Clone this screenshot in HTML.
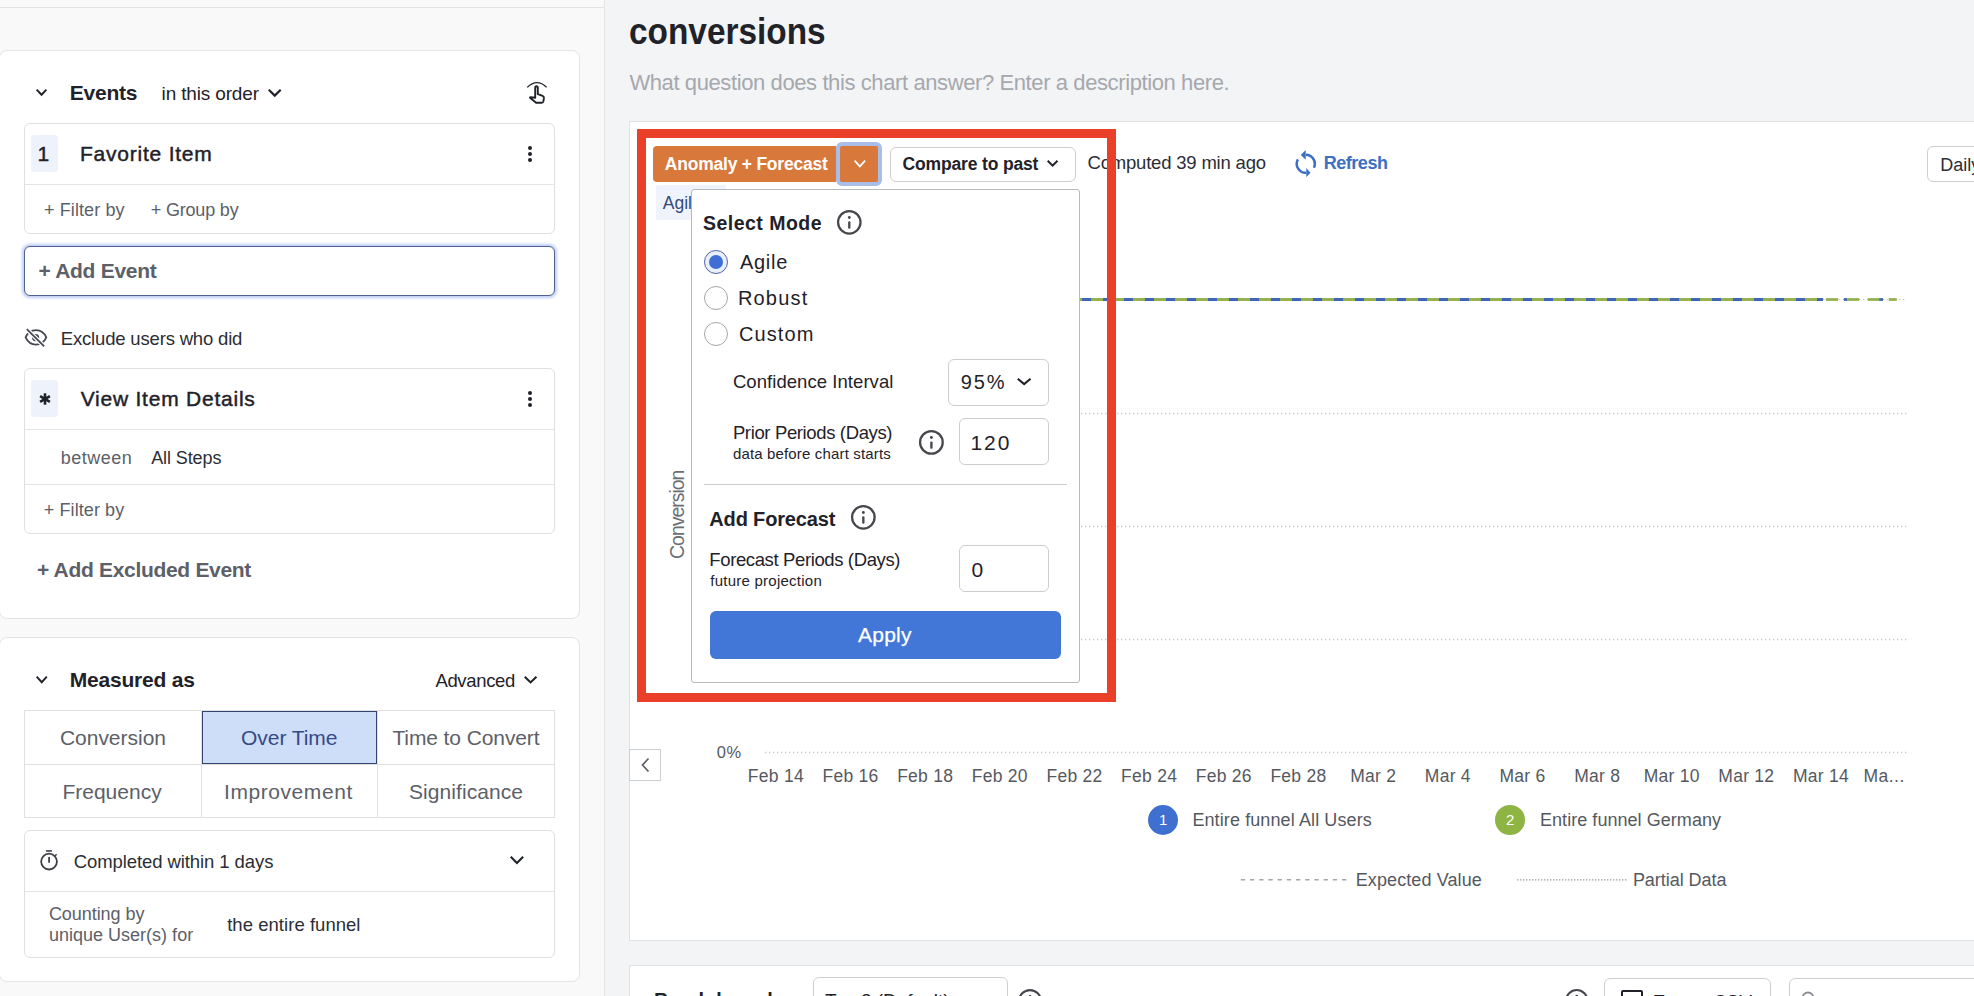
<!DOCTYPE html>
<html><head><meta charset="utf-8">
<style>
*{box-sizing:border-box;margin:0;padding:0}
html,body{width:1974px;height:996px;overflow:hidden;font-family:"Liberation Sans",sans-serif;color:#1f2229}
body{position:relative;background:#f3f4f6}
.a{position:absolute}
.t{position:absolute;white-space:nowrap;line-height:1;z-index:2}
.card{position:absolute;background:#fff;border:1px solid #e3e4e6;border-radius:8px}
.box{position:absolute;background:#fff;border:1px solid #dfe0e2;border-radius:6px}
</style></head>
<body>
<div class="a" style="left:0;top:0;width:605px;height:996px;background:#f9f9fa;border-right:1px solid #e4e5e7"></div>
<div class="a" style="left:0;top:7px;width:604px;height:1px;background:#e2e3e5"></div>
<div class="card" style="left:-1px;top:50px;width:581px;height:569px"></div>
<svg class="a" style="left:35.9px;top:89.2px;overflow:visible;" width="11.10" height="7.10" viewBox="0 0 11.10 7.10"><path d="M0.67 0.67 L5.55 5.76 L10.43 0.67" fill="none" stroke="#1f2229" stroke-width="1.9" stroke-linejoin="miter"/></svg>
<svg class="a" style="left:267.5px;top:88.8px;overflow:visible;" width="13.50" height="8.20" viewBox="0 0 13.50 8.20"><path d="M0.78 0.78 L6.75 6.64 L12.72 0.78" fill="none" stroke="#1f2229" stroke-width="2.2" stroke-linejoin="miter"/></svg>
<svg class="a" style="left:518px;top:74px" width="38" height="38" viewBox="0 0 38 38"><path d="M9.2 13.4 Q18.9 4 28.6 13.2" fill="none" stroke="#1f2229" stroke-width="1.3"/><path d="M17.2 23.8 L17.2 14 Q17.2 12.3 18.5 12.3 Q19.8 12.3 19.8 14 L19.8 20.1 L24.6 21.9 Q26.1 22.5 25.9 24.2 L25.4 27.4 Q25.1 28.8 23.8 28.8 L18.1 28.8 L12.3 24.1 Q11.5 23.3 12.6 23.2 Z" fill="none" stroke="#1f2229" stroke-width="1.9" stroke-linejoin="round"/></svg>
<div class="box" style="left:24px;top:123px;width:531px;height:111px"></div>
<div class="a" style="left:31px;top:135px;width:27px;height:37px;background:#eef3fb;border-radius:3px"></div>
<svg class="a" style="left:526px;top:144px" width="8" height="20" viewBox="0 0 8 20"><circle cx="4" cy="4" r="2" fill="#1f2229"/><circle cx="4" cy="10" r="2" fill="#1f2229"/><circle cx="4" cy="16" r="2" fill="#1f2229"/></svg>
<div class="a" style="left:25px;top:184px;width:529px;height:1px;background:#e3e4e6"></div>
<div class="a" style="left:24px;top:246px;width:531px;height:50px;border:1.3px solid #52618f;border-radius:6px;background:#fff;box-shadow:0 0 3px 2px #bccdf5"></div>
<svg class="a" style="left:20px;top:320px" width="34" height="34" viewBox="0 0 34 34"><path d="M5.6 17.4 C8.5 11.2 12 10.2 16 10.2 C20 10.2 23.5 11.2 26.3 17.4 C23.5 23.6 20 24.6 16 24.6 C12 24.6 8.5 23.6 5.6 17.4 Z" fill="none" stroke="#45484f" stroke-width="1.8"/><circle cx="15.6" cy="17.6" r="3.6" fill="#45484f"/><path d="M6.8 9.2 L24.2 26.3" stroke="#fff" stroke-width="4.2"/><path d="M6.8 9.2 L24.2 26.3" stroke="#45484f" stroke-width="1.8"/></svg>
<div class="box" style="left:24px;top:368px;width:531px;height:166px"></div>
<div class="a" style="left:31px;top:380px;width:27px;height:37px;background:#eef3fb;border-radius:3px"></div>
<svg class="a" style="left:37.5px;top:391.7px" width="14" height="14" viewBox="0 0 14 14"><g stroke="#1f2229" stroke-width="2.6"><path d="M7 1.3 V12.7"/><path d="M2.1 4.15 L11.9 9.85"/><path d="M2.1 9.85 L11.9 4.15"/></g></svg>
<svg class="a" style="left:526px;top:389px" width="8" height="20" viewBox="0 0 8 20"><circle cx="4" cy="4" r="2" fill="#1f2229"/><circle cx="4" cy="10" r="2" fill="#1f2229"/><circle cx="4" cy="16" r="2" fill="#1f2229"/></svg>
<div class="a" style="left:25px;top:429px;width:529px;height:1px;background:#e3e4e6"></div>
<div class="a" style="left:25px;top:484px;width:529px;height:1px;background:#e3e4e6"></div>
<div class="card" style="left:-1px;top:637px;width:581px;height:345px"></div>
<svg class="a" style="left:35.7px;top:676.2px;overflow:visible;" width="11.50" height="7.60" viewBox="0 0 11.50 7.60"><path d="M0.67 0.67 L5.75 6.26 L10.83 0.67" fill="none" stroke="#1f2229" stroke-width="1.9" stroke-linejoin="miter"/></svg>
<svg class="a" style="left:523.5px;top:675.8px;overflow:visible;" width="13.20" height="7.90" viewBox="0 0 13.20 7.90"><path d="M0.74 0.74 L6.60 6.42 L12.46 0.74" fill="none" stroke="#1f2229" stroke-width="2.1" stroke-linejoin="miter"/></svg>
<div class="a" style="left:24px;top:710px;width:531px;height:108px;border:1px solid #dfe0e2;background:#fff"></div>
<div class="a" style="left:201px;top:710px;width:1px;height:108px;background:#dfe0e2"></div>
<div class="a" style="left:377px;top:710px;width:1px;height:108px;background:#dfe0e2"></div>
<div class="a" style="left:25px;top:764px;width:529px;height:1px;background:#dfe0e2"></div>
<div class="a" style="left:202px;top:711px;width:175px;height:53px;background:#cfdef8;border:1.4px solid #34446f"></div>
<div class="box" style="left:24px;top:830px;width:531px;height:128px"></div>
<svg class="a" style="left:34px;top:844px" width="30" height="30" viewBox="0 0 30 30"><circle cx="15.05" cy="17.6" r="7.9" fill="none" stroke="#3c3f46" stroke-width="1.8"/><path d="M12 6.95 H17.9" stroke="#3c3f46" stroke-width="1.6"/><path d="M15.1 13.1 V18.7" stroke="#3c3f46" stroke-width="1.8"/><path d="M21.1 11.7 L22.6 10.2" stroke="#3c3f46" stroke-width="1.6"/></svg>
<svg class="a" style="left:510.2px;top:856.4px;overflow:visible;" width="13.90" height="8.50" viewBox="0 0 13.90 8.50"><path d="M0.74 0.74 L6.95 7.02 L13.16 0.74" fill="none" stroke="#1f2229" stroke-width="2.1" stroke-linejoin="miter"/></svg>
<div class="a" style="left:25px;top:891px;width:529px;height:1px;background:#e3e4e6"></div>
<div class="a" style="left:629px;top:121px;width:1360px;height:820px;background:#fff;border:1px solid #e1e2e4"></div>
<svg class="a" style="left:630px;top:122px" width="1344" height="818" viewBox="630 122 1344 818"><g stroke="#c5c7cb" stroke-width="1.3" stroke-dasharray="1.3 2.7"><line x1="765" y1="413.5" x2="1907" y2="413.5"/><line x1="765" y1="526.5" x2="1907" y2="526.5"/><line x1="765" y1="639.5" x2="1907" y2="639.5"/><line x1="765" y1="752.5" x2="1907" y2="752.5"/></g><line x1="1823" y1="299.5" x2="1907" y2="299.5" stroke="#b8bbc0" stroke-width="1.2" stroke-dasharray="1.3 2.7"/><line x1="1080" y1="299.5" x2="1823" y2="299.5" stroke="#95b150" stroke-width="2.8"/><line x1="1080" y1="299.5" x2="1823" y2="299.5" stroke="#3e66b8" stroke-width="2.8" stroke-dasharray="9 12" stroke-dashoffset="19"/><g stroke-width="2.8"><line x1="1825.8" y1="299.5" x2="1838.2" y2="299.5" stroke="#95b150"/><line x1="1843.9" y1="299.5" x2="1847.2" y2="299.5" stroke="#3e66b8"/><line x1="1847.2" y1="299.5" x2="1859.2" y2="299.5" stroke="#95b150"/><line x1="1867.8" y1="299.5" x2="1879.2" y2="299.5" stroke="#95b150"/><line x1="1879.2" y1="299.5" x2="1883" y2="299.5" stroke="#3e66b8"/><line x1="1888.8" y1="299.5" x2="1896.8" y2="299.5" stroke="#95b150"/></g></svg>
<div class="a" style="left:629px;top:749px;width:32px;height:32px;border:1px solid #cdcfd3;background:#fff"></div>
<svg class="a" style="left:640px;top:757px" width="11" height="16" viewBox="0 0 11 16"><path d="M8.5 1.5 L2.5 8 L8.5 14.5" fill="none" stroke="#5a5e66" stroke-width="1.7"/></svg>
<div class="a" style="left:1147.8px;top:805px;width:30.1px;height:30px;border-radius:50%;background:#3f6fcf"></div>
<div class="a" style="left:1494.9px;top:804.9px;width:30.2px;height:30px;border-radius:50%;background:#8eb544"></div>
<svg class="a" style="left:1240px;top:875px" width="390" height="10" viewBox="1240 875 390 10"><line x1="1240.8" y1="879.7" x2="1350" y2="879.7" stroke="#a3a6ab" stroke-width="1.6" stroke-dasharray="4.3 4.9"/><line x1="1517" y1="879.8" x2="1627" y2="879.8" stroke="#9b9ea4" stroke-width="1.3" stroke-dasharray="1.4 1.6"/></svg>
<svg class="a" style="left:1288px;top:145px" width="36" height="37" viewBox="0 0 36 37"><path d="M17.8 9.8 A9 9 0 0 1 25.9 22.7" fill="none" stroke="#3d6fc3" stroke-width="2.5"/><path d="M9.9 14.4 A9 9 0 0 0 18.4 27.8" fill="none" stroke="#3d6fc3" stroke-width="2.5"/><path d="M12.8 9.9 L17.7 5.1 L17.7 14.7 Z" fill="#3d6fc3"/><path d="M22.5 27.7 L18.3 23 L18.3 32.2 Z" fill="#3d6fc3"/></svg>
<div class="a" style="left:1927px;top:146px;width:80px;height:36px;border:1px solid #cdcfd3;border-radius:6px;background:#fff"></div>
<div class="a" style="left:890px;top:146.5px;width:186px;height:35.5px;border:1px solid #cdcfd3;border-radius:6px;background:#fff"></div>
<svg class="a" style="left:1046.8px;top:160.4px;overflow:visible;" width="11.20" height="7.10" viewBox="0 0 11.20 7.10"><path d="M0.71 0.71 L5.60 5.69 L10.49 0.71" fill="none" stroke="#1f2229" stroke-width="2" stroke-linejoin="miter"/></svg>
<div class="a" style="left:653.3px;top:146px;width:183px;height:35.5px;background:#d8783b;border-radius:4px 0 0 4px"></div>
<div class="a" style="left:836px;top:141.6px;width:45.7px;height:44px;border:4px solid #a9bde9;border-radius:6px;background:#d8783b"></div>
<svg class="a" style="left:853.6px;top:160.3px;overflow:visible;z-index:3;" width="11.70" height="7.60" viewBox="0 0 11.70 7.60"><path d="M0.60 0.60 L5.85 6.40 L11.10 0.60" fill="none" stroke="#fff" stroke-width="1.7" stroke-linejoin="miter"/></svg>
<div class="a" style="left:656px;top:185.4px;width:70px;height:35px;background:#eff4fc;border-radius:2px"></div>
<div class="a" style="left:637px;top:129px;width:479px;height:573px;border:9px solid #ea4029;z-index:5"></div>
<div class="a" style="left:691px;top:188.8px;width:388.5px;height:494.2px;background:#fff;border:1px solid #b7b9bd;border-radius:3px;z-index:6"></div>
<svg class="a" style="left:836.5px;top:210.3px;z-index:7;overflow:visible" width="24.6" height="24.6" viewBox="0 0 24 24"><circle cx="12" cy="12" r="10.95" fill="none" stroke="#46484e" stroke-width="2.2"/><circle cx="12" cy="7.3" r="1.4" fill="#46484e"/><path d="M12 12.2 V17.1" stroke="#46484e" stroke-width="2.3" stroke-linecap="round"/></svg>
<div class="a" style="left:704px;top:249.8px;width:23.8px;height:23.8px;border-radius:50%;border:1.3px solid #4d62a6;background:#e9f0fb;z-index:7"></div>
<div class="a" style="left:708.9px;top:254.6px;width:14.2px;height:14.2px;border-radius:50%;background:#3e6ed6;z-index:7"></div>
<div class="a" style="left:704px;top:285.8px;width:24px;height:24px;border-radius:50%;border:1px solid #a3a6ab;z-index:7"></div>
<div class="a" style="left:704px;top:322px;width:24px;height:24px;border-radius:50%;border:1px solid #a3a6ab;z-index:7"></div>
<div class="a" style="left:948.3px;top:358.5px;width:100.3px;height:47px;border:1px solid #cbcdd1;border-radius:6px;z-index:7"></div>
<svg class="a" style="left:1017.3px;top:378px;overflow:visible;z-index:7;" width="14.30" height="7.60" viewBox="0 0 14.30 7.60"><path d="M0.74 0.74 L7.15 6.12 L13.56 0.74" fill="none" stroke="#1f2229" stroke-width="2.1" stroke-linejoin="miter"/></svg>
<svg class="a" style="left:919.4px;top:429.6px;z-index:7;overflow:visible" width="24.8" height="24.8" viewBox="0 0 24 24"><circle cx="12" cy="12" r="10.95" fill="none" stroke="#46484e" stroke-width="2.2"/><circle cx="12" cy="7.3" r="1.4" fill="#46484e"/><path d="M12 12.2 V17.1" stroke="#46484e" stroke-width="2.3" stroke-linecap="round"/></svg>
<div class="a" style="left:959.4px;top:418.3px;width:89.2px;height:47px;border:1px solid #cbcdd1;border-radius:6px;z-index:7"></div>
<div class="a" style="left:704px;top:484px;width:363px;height:1px;background:#c9cbcf;z-index:7"></div>
<svg class="a" style="left:850.5px;top:505.4px;z-index:7;overflow:visible" width="24.7" height="24.7" viewBox="0 0 24 24"><circle cx="12" cy="12" r="10.95" fill="none" stroke="#46484e" stroke-width="2.2"/><circle cx="12" cy="7.3" r="1.4" fill="#46484e"/><path d="M12 12.2 V17.1" stroke="#46484e" stroke-width="2.3" stroke-linecap="round"/></svg>
<div class="a" style="left:959px;top:545px;width:89.7px;height:47.4px;border:1px solid #cbcdd1;border-radius:6px;z-index:7"></div>
<div class="a" style="left:710.3px;top:610.9px;width:350.6px;height:47.8px;background:#4276d7;border-radius:6px;z-index:7"></div>
<div class="a" style="left:629px;top:965px;width:1360px;height:60px;background:#fff;border:1px solid #e1e2e4"></div>
<div class="a" style="left:812.6px;top:977.2px;width:195px;height:40px;border:1px solid #cdcfd3;border-radius:6px;background:#fff"></div>
<svg class="a" style="left:1017.8px;top:988.8px;z-index:1;overflow:visible" width="24" height="24" viewBox="0 0 24 24"><circle cx="12" cy="12" r="10.95" fill="none" stroke="#46484e" stroke-width="2.2"/><circle cx="12" cy="7.3" r="1.4" fill="#46484e"/><path d="M12 12.2 V17.1" stroke="#46484e" stroke-width="2.3" stroke-linecap="round"/></svg>
<svg class="a" style="left:1565.3px;top:989.2px;z-index:1;overflow:visible" width="23.5" height="23.5" viewBox="0 0 24 24"><circle cx="12" cy="12" r="10.95" fill="none" stroke="#46484e" stroke-width="2.2"/><circle cx="12" cy="7.3" r="1.4" fill="#46484e"/><path d="M12 12.2 V17.1" stroke="#46484e" stroke-width="2.3" stroke-linecap="round"/></svg>
<div class="a" style="left:1604.4px;top:977.9px;width:166.2px;height:40px;border:1px solid #cdcfd3;border-radius:6px;background:#fff"></div>
<div class="a" style="left:1620.8px;top:990.4px;width:22.5px;height:18px;border:2.2px solid #1f2229;border-radius:2px"></div>
<div class="a" style="left:1789.3px;top:978.4px;width:200px;height:40px;border:1px solid #cdcfd3;border-radius:6px;background:#fff"></div>
<svg class="a" style="left:1800px;top:990px" width="20" height="20" viewBox="0 0 20 20"><circle cx="8" cy="8" r="5.5" fill="none" stroke="#8a8d93" stroke-width="1.8"/></svg>
<div class="t" style="left:69.80px;top:82.20px;font-size:21px;color:#1f2229;letter-spacing:-0.240px;font-weight:bold;">Events</div>
<div class="t" style="left:161.60px;top:83.80px;font-size:19px;color:#1f2229;letter-spacing:-0.158px;">in this order</div>
<div class="t" style="left:37.60px;top:142.90px;font-size:21px;color:#1f2229;letter-spacing:1.100px;-webkit-text-stroke:0.45px currentColor;">1</div>
<div class="t" style="left:79.90px;top:142.90px;font-size:21px;color:#1f2229;letter-spacing:0.783px;-webkit-text-stroke:0.45px currentColor;">Favorite Item</div>
<div class="t" style="left:44.00px;top:201.20px;font-size:18px;color:#5c6068;letter-spacing:0.100px;">+ Filter by</div>
<div class="t" style="left:150.80px;top:201.20px;font-size:18px;color:#5c6068;letter-spacing:-0.189px;">+ Group by</div>
<div class="t" style="left:38.50px;top:259.90px;font-size:21px;color:#5c6068;letter-spacing:-0.300px;font-weight:bold;">+ Add Event</div>
<div class="t" style="left:60.80px;top:330.20px;font-size:18.5px;color:#2b2e35;letter-spacing:-0.175px;">Exclude users who did</div>
<div class="t" style="left:80.70px;top:387.80px;font-size:21px;color:#1f2229;letter-spacing:0.769px;-webkit-text-stroke:0.45px currentColor;">View Item Details</div>
<div class="t" style="left:60.80px;top:449.20px;font-size:18px;color:#5c6068;letter-spacing:0.467px;">between</div>
<div class="t" style="left:151.20px;top:449.20px;font-size:18px;color:#2b2e35;letter-spacing:-0.100px;">All Steps</div>
<div class="t" style="left:43.80px;top:501.20px;font-size:18px;color:#5c6068;letter-spacing:0.090px;">+ Filter by</div>
<div class="t" style="left:36.90px;top:559.00px;font-size:21px;color:#5c6068;letter-spacing:-0.311px;font-weight:bold;">+ Add Excluded Event</div>
<div class="t" style="left:69.70px;top:669.00px;font-size:21px;color:#1f2229;letter-spacing:-0.190px;font-weight:bold;">Measured as</div>
<div class="t" style="left:435.40px;top:671.90px;font-size:18.5px;color:#1f2229;letter-spacing:-0.343px;">Advanced</div>
<div class="t" style="left:59.90px;top:727.10px;font-size:21px;color:#5c6068;letter-spacing:-0.011px;">Conversion</div>
<div class="t" style="left:241.10px;top:727.10px;font-size:21px;color:#344a85;letter-spacing:-0.062px;">Over Time</div>
<div class="t" style="left:392.40px;top:727.10px;font-size:21px;color:#5c6068;letter-spacing:-0.100px;">Time to Convert</div>
<div class="t" style="left:62.40px;top:780.80px;font-size:21px;color:#5c6068;letter-spacing:0.012px;">Frequency</div>
<div class="t" style="left:224.00px;top:780.80px;font-size:21px;color:#5c6068;letter-spacing:0.570px;">Improvement</div>
<div class="t" style="left:408.90px;top:780.80px;font-size:21px;color:#5c6068;letter-spacing:0.082px;">Significance</div>
<div class="t" style="left:73.70px;top:853.20px;font-size:18.5px;color:#2b2e35;letter-spacing:-0.082px;">Completed within 1 days</div>
<div class="t" style="left:48.90px;top:905.10px;font-size:18px;color:#5c6068;letter-spacing:-0.050px;">Counting by</div>
<div class="t" style="left:48.90px;top:926.00px;font-size:18px;color:#5c6068;letter-spacing:0.012px;">unique User(s) for</div>
<div class="t" style="left:227.20px;top:916.10px;font-size:18.5px;color:#2b2e35;letter-spacing:0.038px;">the entire funnel</div>
<div class="t" style="left:629.40px;top:13.00px;font-size:37px;color:#1f2229;font-weight:bold;transform-origin:0 0;transform:scaleX(0.9019);">conversions</div>
<div class="t" style="left:629.40px;top:72.10px;font-size:22px;color:#a5a8ad;letter-spacing:-0.398px;">What question does this chart answer? Enter a description here.</div>
<div class="t" style="left:664.80px;top:156.00px;font-size:17.5px;color:#fff;letter-spacing:-0.224px;font-weight:bold;">Anomaly + Forecast</div>
<div class="t" style="left:902.60px;top:155.90px;font-size:17.5px;color:#1f2229;letter-spacing:-0.164px;font-weight:bold;">Compare to past</div>
<div class="t" style="left:1087.50px;top:154.40px;font-size:18.5px;color:#2b2e35;letter-spacing:-0.194px;">Computed 39 min ago</div>
<div class="t" style="left:1323.80px;top:154.40px;font-size:18px;color:#3d6fc3;letter-spacing:-0.483px;font-weight:bold;">Refresh</div>
<div class="t" style="left:1940.30px;top:156.00px;font-size:18px;color:#2b2e35;">Daily</div>
<div class="t" style="left:662.80px;top:195.00px;font-size:17.5px;color:#34497f;">Agile</div>
<div class="t" style="z-index:7;left:702.90px;top:214.10px;font-size:19.5px;color:#1f2229;letter-spacing:0.490px;font-weight:bold;">Select Mode</div>
<div class="t" style="z-index:7;left:739.90px;top:252.40px;font-size:20px;color:#1f2229;letter-spacing:0.750px;">Agile</div>
<div class="t" style="z-index:7;left:737.90px;top:288.10px;font-size:20px;color:#1f2229;letter-spacing:1.200px;">Robust</div>
<div class="t" style="z-index:7;left:738.90px;top:323.70px;font-size:20px;color:#1f2229;letter-spacing:1.100px;">Custom</div>
<div class="t" style="z-index:7;left:732.90px;top:372.70px;font-size:18.5px;color:#1f2229;letter-spacing:0.061px;">Confidence Interval</div>
<div class="t" style="z-index:7;left:960.80px;top:372.40px;font-size:20px;color:#1f2229;letter-spacing:1.850px;">95%</div>
<div class="t" style="z-index:7;left:732.90px;top:424.30px;font-size:18.5px;color:#1f2229;letter-spacing:-0.363px;">Prior Periods (Days)</div>
<div class="t" style="z-index:7;left:732.90px;top:445.50px;font-size:15px;color:#1f2229;letter-spacing:0.157px;">data before chart starts</div>
<div class="t" style="z-index:7;left:970.60px;top:432.40px;font-size:21px;color:#1f2229;letter-spacing:1.850px;">120</div>
<div class="t" style="z-index:7;left:709.30px;top:508.90px;font-size:20px;color:#1f2229;letter-spacing:-0.164px;font-weight:bold;">Add Forecast</div>
<div class="t" style="z-index:7;left:709.30px;top:550.80px;font-size:18.5px;color:#1f2229;letter-spacing:-0.377px;">Forecast Periods (Days)</div>
<div class="t" style="z-index:7;left:710.30px;top:572.50px;font-size:15px;color:#1f2229;letter-spacing:0.244px;">future projection</div>
<div class="t" style="z-index:7;left:971.60px;top:559.20px;font-size:21px;color:#1f2229;letter-spacing:0.600px;">0</div>
<div class="t" style="z-index:7;left:858.00px;top:624.00px;font-size:21px;color:#fff;letter-spacing:0.250px;-webkit-text-stroke:0.25px currentColor;">Apply</div>
<div class="t" style="left:716.70px;top:744.20px;font-size:16.5px;color:#55595f;letter-spacing:0.600px;">0%</div>
<div class="t" style="left:747.85px;top:767.50px;font-size:17.5px;color:#55595f;letter-spacing:0.260px;">Feb 14</div>
<div class="t" style="left:822.50px;top:767.50px;font-size:17.5px;color:#55595f;letter-spacing:0.260px;">Feb 16</div>
<div class="t" style="left:897.15px;top:767.50px;font-size:17.5px;color:#55595f;letter-spacing:0.260px;">Feb 18</div>
<div class="t" style="left:971.80px;top:767.50px;font-size:17.5px;color:#55595f;letter-spacing:0.260px;">Feb 20</div>
<div class="t" style="left:1046.45px;top:767.50px;font-size:17.5px;color:#55595f;letter-spacing:0.260px;">Feb 22</div>
<div class="t" style="left:1121.10px;top:767.50px;font-size:17.5px;color:#55595f;letter-spacing:0.260px;">Feb 24</div>
<div class="t" style="left:1195.75px;top:767.50px;font-size:17.5px;color:#55595f;letter-spacing:0.260px;">Feb 26</div>
<div class="t" style="left:1270.40px;top:767.50px;font-size:17.5px;color:#55595f;letter-spacing:0.260px;">Feb 28</div>
<div class="t" style="left:1350.18px;top:767.50px;font-size:17.5px;color:#55595f;letter-spacing:0.260px;">Mar 2</div>
<div class="t" style="left:1424.83px;top:767.50px;font-size:17.5px;color:#55595f;letter-spacing:0.260px;">Mar 4</div>
<div class="t" style="left:1499.48px;top:767.50px;font-size:17.5px;color:#55595f;letter-spacing:0.260px;">Mar 6</div>
<div class="t" style="left:1574.13px;top:767.50px;font-size:17.5px;color:#55595f;letter-spacing:0.260px;">Mar 8</div>
<div class="t" style="left:1643.65px;top:767.50px;font-size:17.5px;color:#55595f;letter-spacing:0.260px;">Mar 10</div>
<div class="t" style="left:1718.30px;top:767.50px;font-size:17.5px;color:#55595f;letter-spacing:0.260px;">Mar 12</div>
<div class="t" style="left:1792.95px;top:767.50px;font-size:17.5px;color:#55595f;letter-spacing:0.260px;">Mar 14</div>
<div class="t" style="left:668.00px;top:559.30px;font-size:19.5px;color:#6a6e75;letter-spacing:-1.022px;transform:rotate(-90deg);transform-origin:0 0;">Conversion</div>
<div class="t" style="left:1863.40px;top:767.50px;font-size:17.5px;color:#55595f;letter-spacing:0.500px;">Ma...</div>
<div class="t" style="left:1192.40px;top:811.00px;font-size:18px;color:#55595f;letter-spacing:0.105px;">Entire funnel All Users</div>
<div class="t" style="left:1540.00px;top:810.90px;font-size:18px;color:#55595f;letter-spacing:0.045px;">Entire funnel Germany</div>
<div class="t" style="left:1355.70px;top:870.80px;font-size:18px;color:#55595f;letter-spacing:0.108px;">Expected Value</div>
<div class="t" style="left:1632.90px;top:870.80px;font-size:18px;color:#55595f;letter-spacing:-0.036px;">Partial Data</div>
<div class="t" style="left:654.00px;top:990.00px;font-size:20px;color:#1f2229;font-weight:bold;">Breakdown by</div>
<div class="t" style="left:825.00px;top:990.50px;font-size:19px;color:#1f2229;">Top 3 (Default)</div>
<div class="t" style="left:1652.70px;top:991.50px;font-size:19px;color:#1f2229;">Export CSV</div>
<div class="t" style="left:1837.50px;top:992.50px;font-size:19px;color:#8a8d93;">Search</div>
<div class="a" style="left:1159px;top:812px;width:8px;height:14px;color:#fff;font-size:15px;line-height:1;z-index:2">1</div>
<div class="a" style="left:1506px;top:812px;width:8px;height:14px;color:#fff;font-size:15px;line-height:1;z-index:2">2</div>
</body></html>
